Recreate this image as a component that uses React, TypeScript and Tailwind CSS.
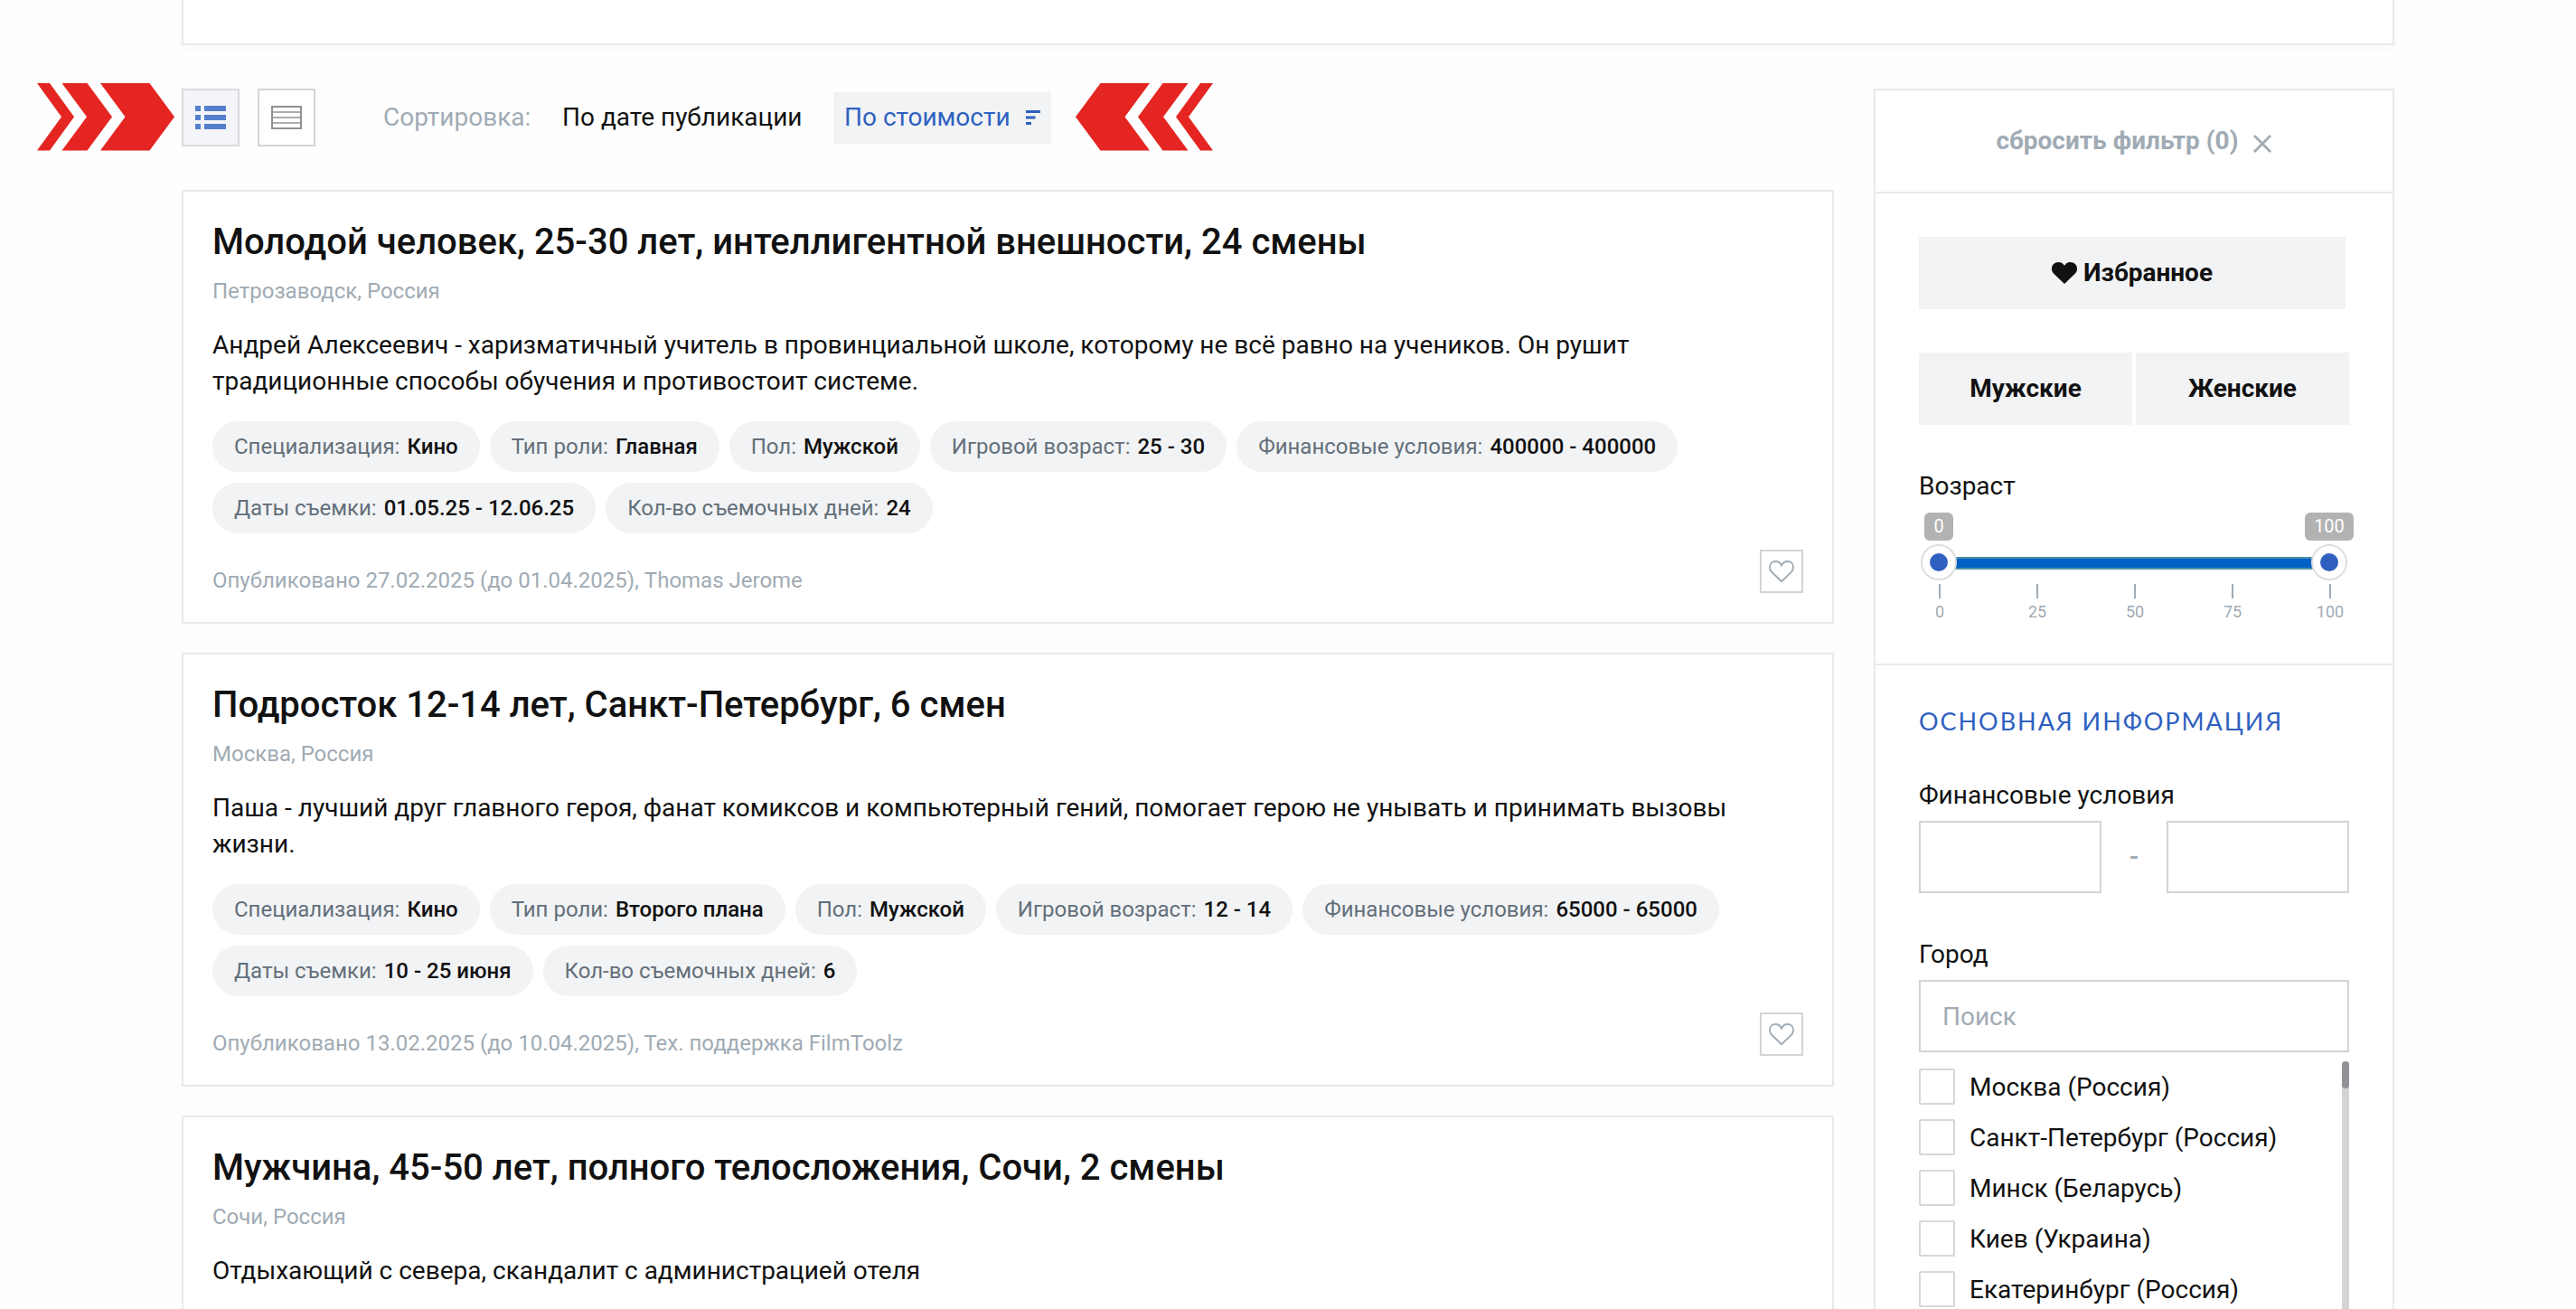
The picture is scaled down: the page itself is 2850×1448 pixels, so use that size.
import { useState } from 'react';

interface Chip {
    label: string;
    value: string;
}

interface Casting {
    id: number;
    title: string;
    city: string;
    description: string;
    chips: Chip[];
    published: string;
}

const castings: Casting[] = [
    {
        id: 1,
        title: 'Молодой человек, 25-30 лет, интеллигентной внешности, 24 смены',
        city: 'Петрозаводск, Россия',
        description:
            'Андрей Алексеевич - харизматичный учитель в провинциальной школе, которому не всё равно на учеников. Он рушит традиционные способы обучения и противостоит системе.',
        chips: [
            { label: 'Специализация:', value: 'Кино' },
            { label: 'Тип роли:', value: 'Главная' },
            { label: 'Пол:', value: 'Мужской' },
            { label: 'Игровой возраст:', value: '25 - 30' },
            { label: 'Финансовые условия:', value: '400000 - 400000' },
            { label: 'Даты съемки:', value: '01.05.25 - 12.06.25' },
            { label: 'Кол-во съемочных дней:', value: '24' },
        ],
        published: 'Опубликовано 27.02.2025 (до 01.04.2025), Thomas Jerome',
    },
    {
        id: 2,
        title: 'Подросток 12-14 лет, Санкт-Петербург, 6 смен',
        city: 'Москва, Россия',
        description:
            'Паша - лучший друг главного героя, фанат комиксов и компьютерный гений, помогает герою не унывать и принимать вызовы жизни.',
        chips: [
            { label: 'Специализация:', value: 'Кино' },
            { label: 'Тип роли:', value: 'Второго плана' },
            { label: 'Пол:', value: 'Мужской' },
            { label: 'Игровой возраст:', value: '12 - 14' },
            { label: 'Финансовые условия:', value: '65000 - 65000' },
            { label: 'Даты съемки:', value: '10 - 25 июня' },
            { label: 'Кол-во съемочных дней:', value: '6' },
        ],
        published: 'Опубликовано 13.02.2025 (до 10.04.2025), Тех. поддержка FilmToolz',
    },
    {
        id: 3,
        title: 'Мужчина, 45-50 лет, полного телосложения, Сочи, 2 смены',
        city: 'Сочи, Россия',
        description: 'Отдыхающий с севера, скандалит с администрацией отеля',
        chips: [],
        published: '',
    },
];

const cities = [
    'Москва (Россия)',
    'Санкт-Петербург (Россия)',
    'Минск (Беларусь)',
    'Киев (Украина)',
    'Екатеринбург (Россия)',
];

const ticks = [0, 25, 50, 75, 100];

function Chevrons({ className }: { className?: string }) {
    return (
        <svg viewBox="0 0 152 75" className={`mb-[2px] h-[75px] w-[152px] shrink-0 ${className ?? ''}`} fill="#e52521">
            <path d="M0 0h14l27 37.3L14 74.6H0l27-37.3z" />
            <path d="M27.500 0h28l27.500 37.300-27.500 37.300h-28l27.500-37.300z" />
            <path d="M70 0h54.500l27.500 37.300-27.500 37.300H70l27.500-37.300z" />
        </svg>
    );
}

function HeartOutline() {
    return (
        <svg viewBox="0 0 28 24" className="h-6 w-7" fill="none" stroke="#a0abb4" strokeWidth="1.9">
            <path d="M14 23.300L3.200 12.800C1.800 11.400 1 9.600 1 7.400 1 3.600 3.700 1 7.400 1c2.800 0 5.200 1.600 6.600 4.500C15.400 2.600 17.800 1 20.600 1 24.300 1 27 3.600 27 7.400c0 2.200-.8 4-2.200 5.400z" />
        </svg>
    );
}

function CastingCard({ casting }: { casting: Casting }) {
    return (
        <div className="h-[480px] border-2 border-[#e6eaee] bg-white px-8 pt-8">
            <h2 className="text-[40px] leading-[48px] font-medium">{casting.title}</h2>
            <p className="mt-3 text-2xl leading-9 text-[#a0abb4]">{casting.city}</p>
            <p className="mt-[22px] text-[28px] leading-10">{casting.description}</p>
            <div className="mt-6 flex flex-wrap gap-x-[11px] gap-y-3">
                {casting.chips.map((chip) => (
                    <div key={chip.label} className="flex h-14 items-center gap-2 rounded-full bg-[#f2f3f5] px-6 text-2xl">
                        <span className="text-[#636f79]">{chip.label}</span>
                        <span className="font-medium">{chip.value}</span>
                    </div>
                ))}
            </div>
            <div className="mt-[18px] flex h-[52px] items-end justify-between">
                <span className="text-2xl leading-9 text-[#a0abb4]">{casting.published}</span>
                <button className="flex size-12 items-center justify-center self-start border-2 border-[#d4d4d4]">
                    <HeartOutline />
                </button>
            </div>
        </div>
    );
}

function AgeSlider() {
    return (
        <div className="relative mt-[9px] ml-[22px] h-[130px] w-[432px]">
            <div className="absolute top-[49px] left-0 h-[14px] w-full border-y-2 border-[#4a8fa8] bg-[#0060c6]" />
            {[0, 100].map((value) => (
                <div
                    key={value}
                    className="absolute top-0 flex w-20 -translate-x-1/2 flex-col items-center"
                    style={{ left: `${value}%` }}
                >
                    <span className="h-[31px] rounded-md bg-[#b2b2b2] px-[10px] text-[20px] leading-[31px] text-white">{value}</span>
                    <span className="mt-1 flex size-10 items-center justify-center rounded-full border-2 border-[#dedede] bg-white">
                        <span className="size-5 shrink-0 rounded-full bg-[#2f60c0]" />
                    </span>
                </div>
            ))}
            {ticks.map((tick) => (
                <div
                    key={tick}
                    className="absolute top-[79px] flex w-10 -translate-x-1/2 flex-col items-center text-lg text-[#a0abb4]"
                    style={{ left: `calc(${tick}% + 1px)` }}
                >
                    <span className="h-4 w-0.5 bg-[#a0abb4]" />
                    <span className="mt-[3px] leading-6">{tick}</span>
                </div>
            ))}
        </div>
    );
}

export default function App() {
    const [search, setSearch] = useState('');

    return (
        <div className="h-[1448px] w-[2850px] overflow-hidden bg-[#fefefe] font-['Roboto',sans-serif] text-[28px] text-[#111]">
            <div className="ml-[201px] h-[50px] w-[2448px] border-2 border-t-0 border-[#e6eaee] bg-white shadow-[0_6px_10px_rgba(0,0,0,0.02)]" />

            <div className="flex items-start">
                <main className="w-[2029px] shrink-0 pt-[42px]">
                    {/* Toolbar */}
                    <div className="flex h-[76px] items-center pl-[41px]">
                        <Chevrons />
                        <button className="ml-2 flex size-16 items-center justify-center border-2 border-[#d8dade] bg-[#f4f5f8]">
                            <svg viewBox="0 0 34 26" className="h-[26px] w-[34px]" fill="#557fcc">
                                <path d="M0 0h6v6H0zM10 0h24v6H10zM0 10h6v6H0zM10 10h24v6H10zM0 20h6v6H0zM10 20h24v6H10z" />
                            </svg>
                        </button>
                        <button className="ml-5 flex size-16 items-center justify-center border-2 border-[#d4d4d4] bg-white">
                            <svg viewBox="0 0 34 26" className="h-[26px] w-[34px]" fill="none" strokeWidth="2">
                                <path stroke="#adadad" d="M1 7h32M1 13h32M1 19h32" />
                                <path stroke="#919191" d="M1 1h32v24H1z" />
                            </svg>
                        </button>
                        <span className="ml-[75px] w-[198px] text-[#a0abb4]">Сортировка:</span>
                        <span className="w-[300px]">По дате публикации</span>
                        <button className="flex h-[57px] w-[241px] items-center justify-between bg-[#f2f3f5] px-3 text-[#2f60c0]">
                            По стоимости
                            <svg viewBox="0 0 16 16" className="h-4 w-4" fill="currentColor">
                                <path d="M0 0h16v3H0zM0 6.500h10.500v3H0zM0 13h6v3H0z" />
                            </svg>
                        </button>
                        <Chevrons className="ml-[27px] -scale-x-100" />
                    </div>

                    {/* Castings */}
                    <div className="mt-[42px] ml-[201px] flex flex-col gap-8">
                        {castings.map((casting) => (
                            <CastingCard key={casting.id} casting={casting} />
                        ))}
                    </div>
                </main>

                {/* Filter */}
                <aside className="mt-12 ml-11 h-[1400px] w-[576px] shrink-0 border-2 border-[#e6eaee] bg-white">
                    <div className="flex h-[114px] items-center justify-center gap-4 border-b-2 border-[#e6eaee] pr-px font-bold text-[#a0abb4]">
                        сбросить фильтр (0)
                        <svg viewBox="0 0 20 20" className="mt-[5px] size-5" stroke="currentColor" strokeWidth="2.8">
                            <path d="M1 1l18 18M19 1L1 19" />
                        </svg>
                    </div>

                    <div className="h-[522px] border-b-2 border-[#e6eaee] px-12 pt-12">
                        <button className="flex h-20 w-[472px] items-center justify-center gap-[7px] bg-[#f2f3f5] font-bold">
                            <svg viewBox="0 0 28 24" className="h-6 w-7" fill="currentColor">
                                <path d="M14 24L2.500 13C.9 11.500 0 9.600 0 7.300 0 3 3.200 0 7.400 0c3 0 5.300 1.500 6.600 4C15.300 1.500 17.600 0 20.600 0 24.800 0 28 3 28 7.300c0 2.300-.9 4.200-2.500 5.700z" />
                            </svg>
                            Избранное
                        </button>
                        <div className="mt-12 grid grid-cols-2 gap-1">
                            <button className="h-20 bg-[#f2f3f5] font-bold">Мужские</button>
                            <button className="h-20 bg-[#f2f3f5] font-bold">Женские</button>
                        </div>
                        <div className="mt-12 leading-10">Возраст</div>
                        <AgeSlider />
                    </div>

                    <div className="px-12 pt-[42px]">
                        <h3 className="font-['Lato',sans-serif] text-[27px] leading-10 tracking-[1.95px] text-[#2f60c0]">
                            ОСНОВНАЯ ИНФОРМАЦИЯ
                        </h3>
                        <div className="mt-[42px] leading-10">Финансовые условия</div>
                        <div className="mt-2 flex items-center justify-between">
                            <input className="h-20 w-[202px] border-2 border-[#d4d4d4]" />
                            <span className="font-bold text-[#a0abb4]">-</span>
                            <input className="h-20 w-[202px] border-2 border-[#d4d4d4]" />
                        </div>
                        <div className="mt-12 leading-10">Город</div>
                        <input
                            className="mt-2 block h-20 w-full border-2 border-[#d4d4d4] px-6 placeholder:text-[#a0abb4]"
                            placeholder="Поиск"
                            value={search}
                            onChange={(e) => setSearch(e.target.value)}
                        />
                        <div className="mt-[10px] flex justify-between">
                            <div className="flex flex-col gap-4 pt-2">
                                {cities.map((city) => (
                                    <label key={city} className="flex h-10 items-center gap-4">
                                        <span className="size-10 rounded-xs border-2 border-[#d8d8d8]" />
                                        <span className="pt-[2px]">{city}</span>
                                    </label>
                                ))}
                            </div>
                            <div className="h-[400px] w-2 rounded-full bg-[#d4d4d4]">
                                <div className="h-[30px] rounded-full bg-[#929297]" />
                            </div>
                        </div>
                    </div>
                </aside>
            </div>
        </div>
    );
}
